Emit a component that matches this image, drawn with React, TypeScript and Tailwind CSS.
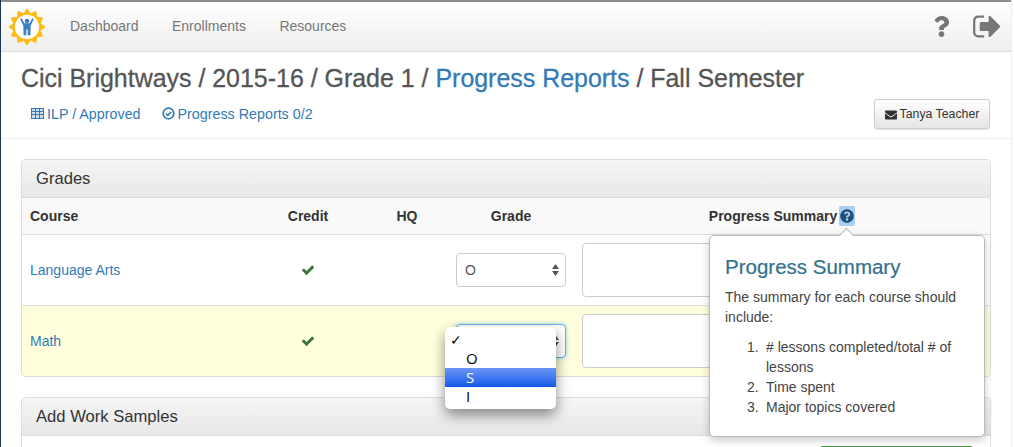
import React from "react";
import { FaQuestion, FaQuestionCircle, FaEnvelope } from "react-icons/fa";

const signOut =
  "M704 1440q0 4 1 20t.5 26.5-3 23.5-10 19.5-20.5 6.5h-320q-119 0-203.5-84.5t-84.5-203.5v-704q0-119 84.5-203.5t203.5-84.5h320q13 0 22.5 9.5t9.5 22.5q0 4 1 20t.5 26.5-3 23.5-10 19.5-20.5 6.5h-320q-66 0-113 47t-47 113v704q0 66 47 113t113 47h312l11.5 1 11.5 3 8 5.5 7 9 2 13.5zm928-544q0 26-19 45l-544 544q-19 19-45 19t-45-19-19-45v-288h-448q-26 0-45-19t-19-45v-384q0-26 19-45t45-19h448v-288q0-26 19-45t45-19 45 19l544 544q19 19 19 45z";
const check =
  "M1671 566q0 40-28 68l-724 724-136 136q-28 28-68 28t-68-28l-136-136-362-362q-28-28-28-68t28-68l136-136q28-28 68-28t68 28l294 295 656-657q28-28 68-28t68 28l136 136q28 28 28 68z";

function Logo() {
  const pts: string[] = [];
  for (let i = 0; i < 24; i++) {
    const r = i % 2 === 0 ? 18.5 : 14;
    const a = (i * Math.PI) / 12 - Math.PI / 2;
    pts.push(`${18.5 + r * Math.cos(a)},${18.5 + r * Math.sin(a)}`);
  }
  return (
    <svg width="36" height="36" viewBox="0 0 37 37" className="shrink-0">
      <polygon points={pts.join(" ")} fill="#fdbb13" stroke="#fdbb13" strokeWidth="1" strokeLinejoin="round" />
      <circle cx="18.5" cy="18.5" r="12.5" fill="#fff" />
      <circle cx="18.5" cy="12.4" r="2.3" fill="#3a7fc1" />
      <path d="M11.6 10.2 L13 9.4 L15.8 14.6 H21.2 L24 9.4 L25.4 10.2 L22.2 17.6 V20 L22 27 H19.2 V21 H17.8 V27 H15 L14.8 20 V17.6 Z" fill="#3a7fc1" />
    </svg>
  );
}

function Check() {
  return (
    <svg width="14" height="14" viewBox="0 0 1792 1792" fill="#3c763d">
      <path d={check} />
    </svg>
  );
}

function TableIcon() {
  return (
    <svg width="13" height="11" viewBox="0 0 13 11" fill="none" stroke="#337ab7" strokeWidth="1">
      <rect x="0.5" y="0.5" width="12" height="10" fill="#337ab7" fillOpacity="0.25" strokeWidth="1" />
      <path d="M0 3.5 H13 M0 6.5 H13 M4.5 0 V11 M8.5 0 V11" />
    </svg>
  );
}

function CheckCircle() {
  return (
    <svg width="13" height="13" viewBox="0 0 13 13" fill="none" stroke="#337ab7">
      <circle cx="6.5" cy="6.5" r="5.3" strokeWidth="1.7" />
      <path d="M3.9 6.5 L5.8 8.4 L9.2 5" strokeWidth="1.7" />
    </svg>
  );
}

function Arrows({ className }: { className: string }) {
  return (
    <svg width="7" height="12" viewBox="0 0 7 12" className={className} fill="#555">
      <path d="M3.5 0 L7 5 H0 Z M3.5 12 L0 7 H7 Z" />
    </svg>
  );
}

function Row({ name, highlight, value, focus }: { name: string; highlight?: boolean; value: string; focus?: boolean }) {
  return (
    <div className={`grid grid-cols-[228px_116px_82px_126px_1fr] h-[71px] items-center border-t border-[#ddd] ${highlight ? "bg-[#ffffdd]" : "bg-white"}`}>
      <a className="pl-2 text-sm text-[#337ab7]">{name}</a>
      <div className="flex justify-center">
        <Check />
      </div>
      <div />
      <div className="px-2">
        <div className={`flex items-center justify-between h-[34px] rounded bg-white pl-2 pr-[6px] text-sm text-[#555] border ${focus ? "border-[#66afe9] shadow-[0_0_4px_rgba(102,175,233,0.6)]" : "border-[#ccc]"}`}>
          <span>{value}</span>
          <Arrows className="shrink-0" />
        </div>
      </div>
      <div className="pl-2 pr-[9px]">
        <div className="h-[54px] rounded border border-[#ccc] bg-white" />
      </div>
    </div>
  );
}

const steps = ["# lessons completed/total # of lessons", "Time spent", "Major topics covered"];

export default function App() {
  return (
    <div className="relative h-[447px] w-full overflow-hidden bg-white font-['Liberation_Sans',Arial,sans-serif] text-sm text-[#333]">
      <div className="flex h-full w-[1012px] flex-col border-r border-[#eee] border-l border-l-[#1c3557]">
        <nav className="flex h-[52px] shrink-0 items-center border-t-2 border-b border-t-[#8c8c8c] border-b-[#ddd] bg-gradient-to-b from-white to-[#eeeeee] pl-[8px] pr-[8px]">
          <Logo />
          <div className="ml-[25px] flex gap-[33.5px] pb-[2px] text-[#777]">
            <a>Dashboard</a>
            <a>Enrollments</a>
            <a>Resources</a>
          </div>
          <div className="ml-auto flex items-center gap-[20px] text-[#777]">
            <FaQuestion size={21} />
            <svg width="31" height="31" viewBox="0 0 1792 1792" fill="#777">
              <path d={signOut} />
            </svg>
          </div>
        </nav>

        <div className="h-[87px] shrink-0 border-b border-[#eee] px-5">
          <h1 className="pt-[13px] text-[24.95px] leading-[27px] text-[#555] [-webkit-text-stroke:0.3px_#555]">
            Cici Brightways / 2015-16 / Grade 1 / <a className="text-[#337ab7] [-webkit-text-stroke:0.3px_#337ab7]">Progress Reports</a> / Fall Semester
          </h1>
          <div className="mt-[7px] flex items-center pl-[10px] text-[14.3px] text-[#337ab7]">
            <a className="flex items-center gap-[3px]">
              <TableIcon />
              ILP / Approved
            </a>
            <a className="ml-[21px] flex items-center gap-[3px]">
              <CheckCircle />
              Progress Reports 0/2
            </a>
            <button className="ml-auto mr-[1px] flex h-[30px] w-[116px] items-center justify-center gap-[3px] rounded-[3px] border border-[#ccc] bg-gradient-to-b from-white to-[#e6e6e6] pt-[1px] text-[12.3px] text-[#333] shadow-[0_1px_1px_rgba(0,0,0,0.1)]">
              <FaEnvelope size={12} />
              Tanya Teacher
            </button>
          </div>
        </div>

        <div className="flex flex-col gap-5 px-5 pt-5">
          <section className="overflow-hidden rounded border border-[#ddd]">
            <h2 className="flex h-[37px] items-center bg-gradient-to-b from-[#f5f5f5] to-[#e8e8e8] pl-[14px] pt-[1px] text-[16.6px] text-[#333]">Grades</h2>
            <div className="grid h-[37px] grid-cols-[228px_116px_82px_126px_1fr] items-center border-t border-[#ddd] bg-[#f9f9f9] text-sm font-bold text-[#333]">
              <div className="pl-2">Course</div>
              <div className="text-center">Credit</div>
              <div className="text-center">HQ</div>
              <div className="text-center">Grade</div>
              <div className="flex items-center justify-center">
                Progress Summary
                <span className="ml-[2px] flex h-[20px] w-[16px] items-center justify-center rounded-[2px] bg-[#a9cff3]">
                  <FaQuestionCircle size={14} className="text-[#1f4e79]" />
                </span>
              </div>
            </div>
            <Row name="Language Arts" value="O" />
            <Row name="Math" value="" highlight focus />
          </section>

          <section className="overflow-hidden rounded border border-[#ddd]">
            <h2 className="flex h-[38px] items-center border-b border-[#ddd] bg-gradient-to-b from-[#f5f5f5] to-[#e8e8e8] pl-[14px] text-[16.6px] text-[#333]">Add Work Samples</h2>
            <div className="flex h-[40px] justify-end pr-[17px] pt-[10px]">
              <div className="h-[30px] w-[153px] rounded-t-[3px] bg-[#3c9a3c]" />
            </div>
          </section>
        </div>
      </div>

      {/* Native select menu */}
      <div className="absolute left-[445px] top-[327px] w-[111px] rounded-[5px] bg-white py-[3px] font-['Open_Sans','Liberation_Sans',sans-serif] text-[15px] leading-[19px] text-black shadow-[0_6px_14px_rgba(0,0,0,0.45)]">
        <div className="flex h-[19px] items-center pl-[5px] text-[14px]">✓</div>
        <div className="h-[19px] pl-[21px]">O</div>
        <div className="h-[19px] bg-gradient-to-b from-[#6b95f6] to-[#0f58ea] pl-[21px] text-white">S</div>
        <div className="h-[19px] pl-[21px]">I</div>
      </div>

      {/* Popover */}
      <div className="absolute left-[709px] top-[235px] h-[202px] w-[276px] rounded-[5px] border border-[#bbb] bg-white px-[15px] pt-[18px] shadow-[0_3px_8px_rgba(0,0,0,0.22)]">
        <div className="absolute left-[131px] top-[-6px] h-[11px] w-[11px] rotate-45 border-l border-t border-[#bbb] bg-white" />
        <h3 className="text-[20.5px] leading-[26px] text-[#31708f] [-webkit-text-stroke:0.2px_#31708f]">Progress Summary</h3>
        <p className="mt-[7px] leading-5 text-[#444]">The summary for each course should include:</p>
        <ol className="mt-[10px] pl-[22px] leading-5 text-[#444]">
          {steps.map((s, i) => (
            <li key={s} className="flex">
              <span className="w-[19px] shrink-0">{i + 1}.</span>
              <span>{s}</span>
            </li>
          ))}
        </ol>
      </div>
    </div>
  );
}
